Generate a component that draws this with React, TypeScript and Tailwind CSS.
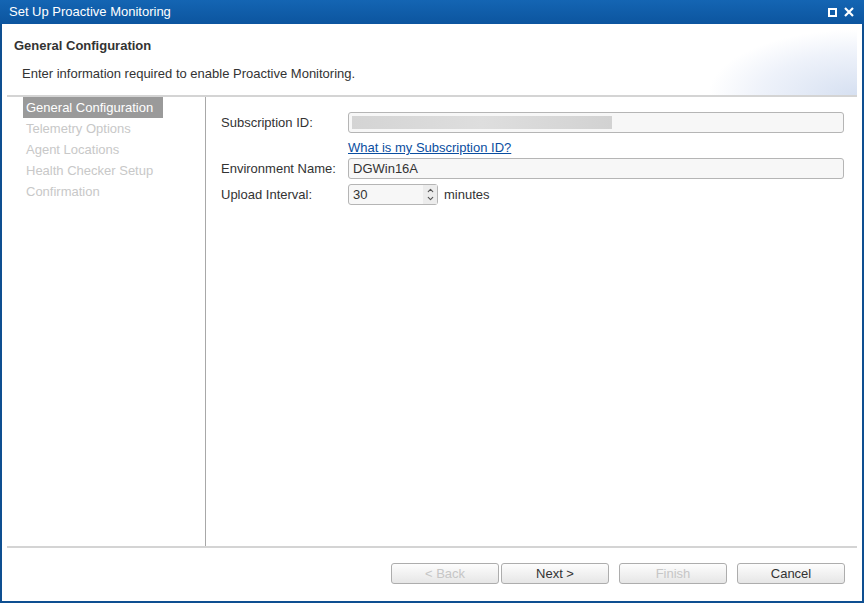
import { ChevronUp, ChevronDown } from "lucide-react";

const steps = ["General Configuration", "Telemetry Options", "Agent Locations", "Health Checker Setup", "Confirmation"];

const Btn = ({ label, disabled, w }: { label: string; disabled?: boolean; w: string }) => (
  <button
    className={`h-[21px] ${w} rounded-[3px] border border-[#adadad] bg-gradient-to-b from-[#fdfdfd] to-[#e6e6e6] text-[13px] ${disabled ? "text-[#c6c6c6]" : "text-[#333]"}`}
  >
    {label}
  </button>
);

export default function App() {
  return (
    <div className="w-[864px] h-[603px] border-2 border-t-0 border-[#0e4f91] bg-white flex flex-col text-[13px] text-[#333]" style={{ fontFamily: '"Liberation Sans", Arial, sans-serif' }}>
      <div className="h-[24px] -mx-[2px] bg-gradient-to-b from-[#1465b3] to-[#0c559f] flex items-center justify-between px-[9px] text-white">
        <span className="text-[13px]">Set Up Proactive Monitoring</span>
        <div className="flex items-center gap-[7px] pr-[1px]">
          <span className="w-[9px] h-[9px] border-2 border-white" />
          <svg width="10" height="10" viewBox="0 0 10 10"><path d="M1 1L9 9M9 1L1 9" stroke="white" strokeWidth="2.2" /></svg>
        </div>
      </div>
      <div className="h-[71px] relative px-[12px] pt-[12px] overflow-hidden">
        <div className="absolute right-[5px] top-[5px] w-[150px] h-[66px] bg-[radial-gradient(ellipse_at_100%_100%,#d6e0f1_0%,#eef2fa_45%,transparent_70%)]" />
        <div className="font-bold text-[13px] text-[#333]">General Configuration</div>
        <div className="mt-[8px] ml-[8px] text-[13px]">Enter information required to enable Proactive Monitoring.</div>
      </div>
      <div className="flex flex-1 mx-[5px] border-t-2 border-[#d4d4d4] border-b-2">
        <div className="w-[199px] border-r border-[#a8a8a8] pl-[16px]">
          {steps.map((s, i) => (
            <div
              key={s}
              className={`h-[21px] leading-[21px] px-[3px] ${i === 0 ? "bg-[#9a9a9a] text-white w-[140px]" : "text-[#c8c8c8]"}`}
            >
              {s}
            </div>
          ))}
        </div>
        <div className="flex-1 pl-[15px] pr-[13px] pt-[15px]">
          <div className="flex items-center">
            <span className="w-[127px]">Subscription ID:</span>
            <div className="flex-1 h-[21px] rounded-[3px] border border-[#b5b5b5] bg-[#f7f7f7] p-[3px]">
              <div className="h-full w-[260px] bg-gradient-to-r from-[#d4d4d4] via-[#dedede] to-[#d2d2d2]" />
            </div>
          </div>
          <div className="ml-[127px] mt-[4px] h-[21px] leading-[21px] text-[#0a4ea0] underline">What is my Subscription ID?</div>
          <div className="flex items-center">
            <span className="w-[127px]">Environment Name:</span>
            <div className="flex-1 h-[21px] rounded-[3px] border border-[#b5b5b5] bg-[#f7f7f7] px-[4px] leading-[19px]">DGWin16A</div>
          </div>
          <div className="flex items-center mt-[5px]">
            <span className="w-[127px]">Upload Interval:</span>
            <div className="w-[90px] h-[21px] rounded-[3px] border border-[#b5b5b5] bg-[#f7f7f7] flex">
              <span className="flex-1 px-[4px] leading-[19px]">30</span>
              <div className="w-[14px] flex flex-col items-center justify-center bg-[#ececec] text-[#555]">
                <ChevronUp size={9} strokeWidth={3} className="-mb-[1px]" />
                <ChevronDown size={9} strokeWidth={3} />
              </div>
            </div>
            <span className="ml-[6px]">minutes</span>
          </div>
        </div>
      </div>
      <div className="h-[53px] flex items-center justify-end gap-[2px] pr-[17px] pb-[2px]">
        <Btn label="< Back" disabled w="w-[108px]" />
        <Btn label="Next >" w="w-[108px]" />
        <div className="w-[6px]" />
        <Btn label="Finish" disabled w="w-[108px]" />
        <div className="w-[6px]" />
        <Btn label="Cancel" w="w-[108px]" />
      </div>
    </div>
  );
}
